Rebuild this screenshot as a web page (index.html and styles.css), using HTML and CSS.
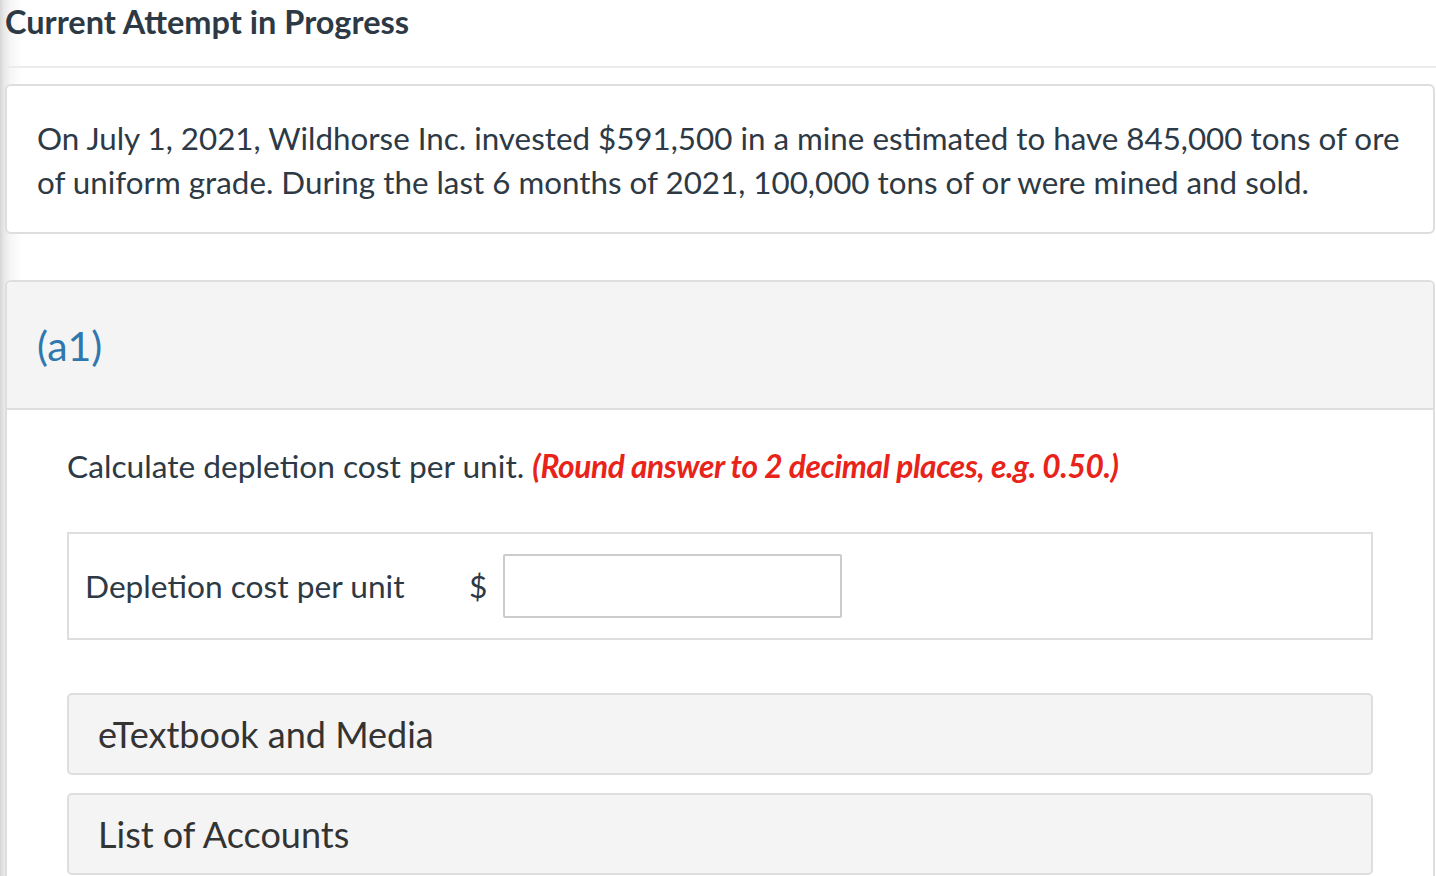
FILE: index.html
```html
<!DOCTYPE html>
<html>
<head>
<meta charset="utf-8">
<link rel="stylesheet" href="styles.css">
</head>
<body>
<div class="page">
  <h1 class="title">Current Attempt in Progress</h1>
  <div class="rule"></div>
  <div class="question">
    <p>On July 1, 2021, Wildhorse Inc. invested $591,500 in a mine estimated to have 845,000 tons of ore of uniform grade. During the last 6 months of 2021, 100,000 tons of or were mined and sold.</p>
  </div>
  <div class="part">
    <div class="part-head">(a1)</div>
    <div class="part-body">
      <p class="instr">Calculate depletion cost per unit. <span class="hint">(Round answer to 2 decimal places, e.g. 0.50.)</span></p>
      <div class="answer">
        <span class="label">Depletion cost per unit</span>
        <span class="cur">$</span>
        <input class="field" type="text">
      </div>
      <div class="acc acc-first">eTextbook and Media</div>
      <div class="acc">List of Accounts</div>
    </div>
  </div>
</div>
</body>
</html>
```
FILE: styles.css
```css
html, body {
  margin: 0;
  padding: 0;
  background: #fff;
  overflow: hidden;
}
body {
  font-family: Lato, "Open Sans", sans-serif;
  color: #2d3a45;
  width: 1436px;
  height: 876px;
}
.page {
  padding-left: 5px;
  background: linear-gradient(to right, #d6d6d6 0px, #e8e8e8 4px, #f5f5f5 10px, #ffffff 22px);
  height: 876px;
  box-sizing: border-box;
  overflow: hidden;
}
.title {
  margin: 0;
  font-size: 32.5px;
  font-weight: 700;
  line-height: 44px;
  height: 44px;
  color: #2d3a45;
}
.rule {
  margin-top: 22px;
  height: 2px;
  background: #ececec;
}
.question {
  margin-top: 16px;
  border: 2px solid #dedede;
  border-radius: 6px;
  background: #fff;
  padding: 30px 26px 28px 30px;
  margin-right: 1px;
}
.question p {
  margin: 0;
  font-size: 31.35px;
  line-height: 44px;
}
.part {
  margin-top: 46px;
  border: 2px solid #dedede;
  border-bottom: none;
  border-radius: 6px 6px 0 0;
  margin-right: 1px;
  background: #fff;
  height: 700px;
}
.part-head {
  background: #f4f4f4;
  height: 126px;
  border-bottom: 2px solid #dedede;
  border-radius: 5px 5px 0 0;
  display: flex;
  align-items: center;
  padding-left: 30px;
  font-size: 41px;
  color: #2f77ad;
}
.part-body {
  padding: 36px 60px 0 60px;
}
.instr {
  margin: 0;
  font-size: 31.7px;
  line-height: 40px;
}
.hint {
  color: #e8231a;
  font-weight: 700;
  font-style: italic;
  letter-spacing: -0.4px;
}
.answer {
  margin-top: 46px;
  border: 2px solid #dedede;
  height: 104px;
  display: flex;
  align-items: center;
  padding-left: 16px;
}
.label {
  font-size: 31.7px;
  width: 384px;
}
.cur {
  font-size: 31.7px;
  width: 34px;
}
.field {
  width: 339px;
  height: 64px;
  box-sizing: border-box;
  border: 2px solid #cccccc;
  border-radius: 2px;
  margin: 0;
  padding: 0;
  background: #fff;
}
.acc {
  margin-top: 18px;
  background: #f4f4f4;
  border: 2px solid #dedede;
  border-radius: 5px;
  height: 78px;
  display: flex;
  align-items: center;
  padding-left: 29px;
  font-size: 36px;
  color: #333;
}
.acc-first {
  margin-top: 53px;
}
```
